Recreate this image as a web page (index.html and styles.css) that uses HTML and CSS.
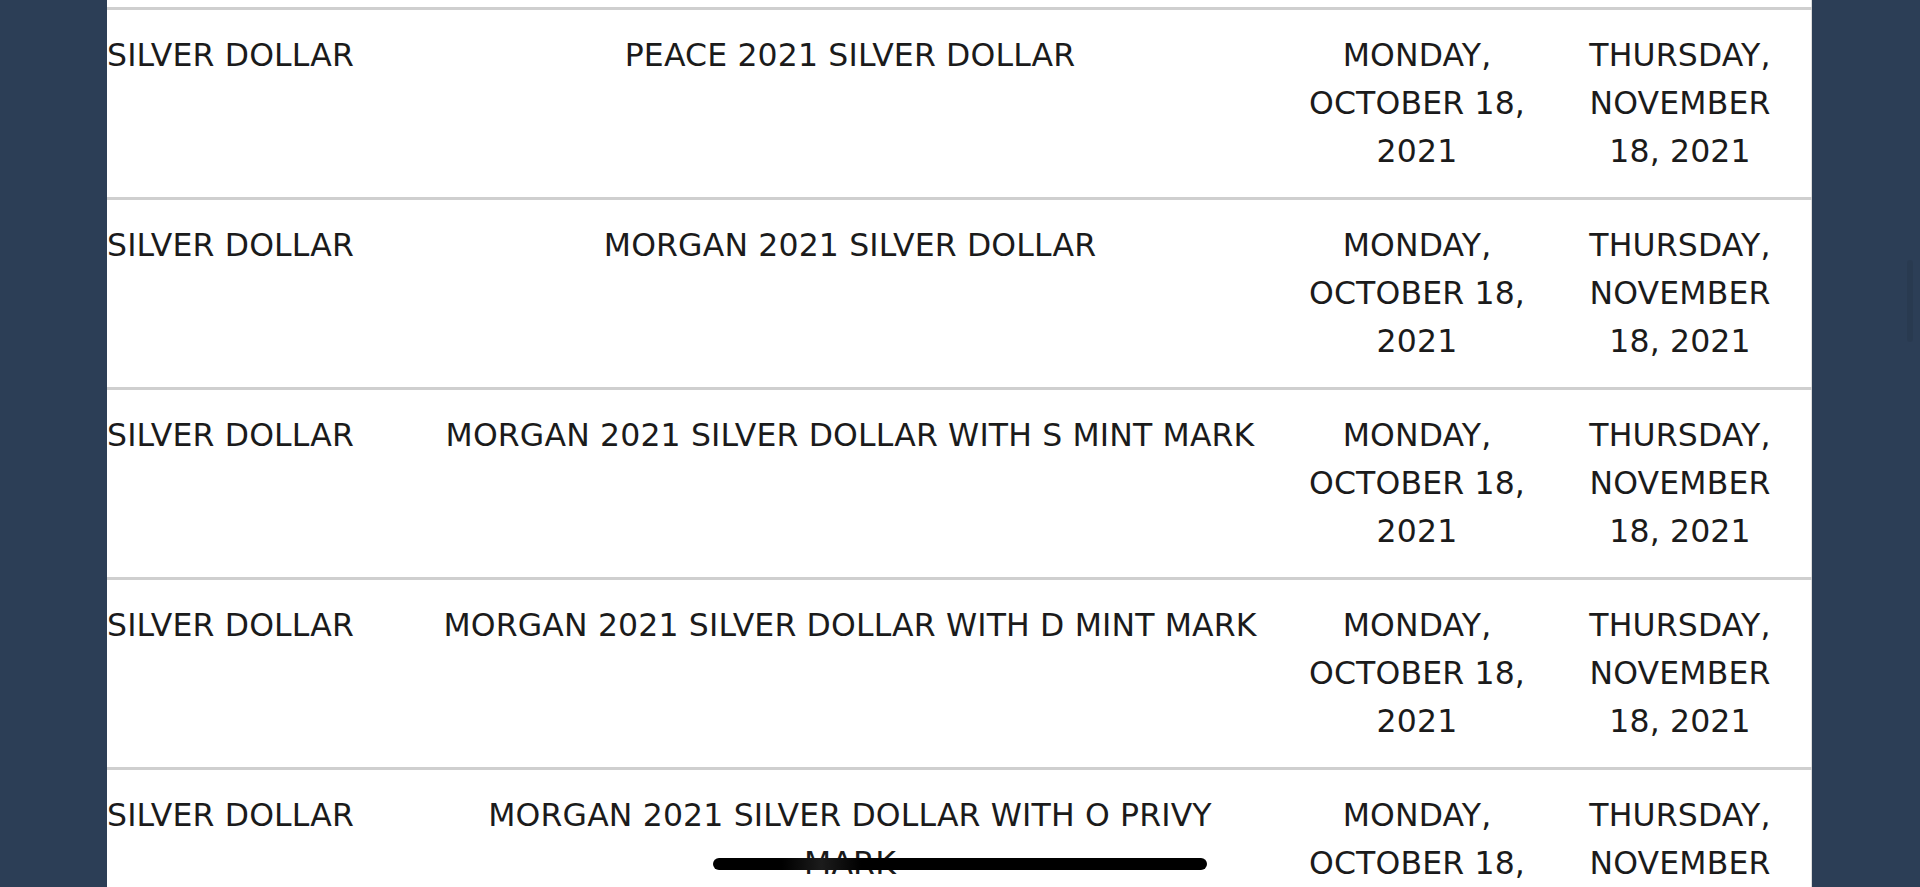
FILE: index.html
```html
<!DOCTYPE html>
<html lang="en">
<head>
	<meta charset="utf-8" />
	<title>2021 Silver Dollar release dates</title>
	<link rel="stylesheet" href="styles.css">
</head>
<body>
    <div class="page">
        <div class="sheet">
            <table class="releases">
                <colgroup>
                    <col class="c-type">
                    <col class="c-name">
                    <col class="c-date">
                    <col class="c-date2">
                </colgroup>
                <tbody>
                    <tr>
                        <td class="type">SILVER DOLLAR</td>
                        <td class="name">PEACE 2021 SILVER DOLLAR</td>
                        <td>MONDAY, OCTOBER 18, 2021</td>
                        <td class="due">THURSDAY, NOVEMBER 18, 2021</td>
                    </tr>
                    <tr>
                        <td class="type">SILVER DOLLAR</td>
                        <td class="name">MORGAN 2021 SILVER DOLLAR</td>
                        <td>MONDAY, OCTOBER 18, 2021</td>
                        <td class="due">THURSDAY, NOVEMBER 18, 2021</td>
                    </tr>
                    <tr>
                        <td class="type">SILVER DOLLAR</td>
                        <td class="name">MORGAN 2021 SILVER DOLLAR WITH S MINT MARK</td>
                        <td>MONDAY, OCTOBER 18, 2021</td>
                        <td class="due">THURSDAY, NOVEMBER 18, 2021</td>
                    </tr>
                    <tr>
                        <td class="type">SILVER DOLLAR</td>
                        <td class="name">MORGAN 2021 SILVER DOLLAR WITH D MINT MARK</td>
                        <td>MONDAY, OCTOBER 18, 2021</td>
                        <td class="due">THURSDAY, NOVEMBER 18, 2021</td>
                    </tr>
                    <tr>
                        <td class="type">SILVER DOLLAR</td>
                        <td class="name">MORGAN 2021 SILVER DOLLAR WITH O PRIVY MARK</td>
                        <td>MONDAY, OCTOBER 18, 2021</td>
                        <td class="due">THURSDAY, NOVEMBER 18, 2021</td>
                    </tr>
                </tbody>
            </table>
        </div>
    </div>

    <!-- overlays: scroll thumb and home indicator -->
    <div class="scroll-thumb"></div>
    <div class="home-bar"></div>
</body>
</html>
```

FILE: styles.css
```css
html, body {
    margin:0;
    height:100%;
}
body {
    background:#2c3e56;
    overflow:hidden;
    font-family:"DejaVu Sans", "Liberation Sans", sans-serif;
}

.page {
    display:flex;
    height:100%;
    padding-left:107px;
}

.sheet {
    width:1705px;
    background:#fff;
    padding-top:7px;
    border-right:1px solid #dcdcdc;
    box-sizing:border-box;
}

.releases {
    width:1705px;
    table-layout:fixed;
    border-collapse:collapse;
    border-spacing:0;
}
.releases .c-type  {width:307px}
.releases .c-name  {width:872px}
.releases .c-date  {width:262px}
.releases .c-date2 {width:264px}

.releases td {
    border-top:3px solid #cfcfcf;
    padding:21px 12px 22px;
    height:144px;
    vertical-align:top;
    text-align:center;
    font-size:31.5px;
    line-height:48px;
    letter-spacing:.15px;
    color:#1b1b1b;
}
.releases td.type {
    text-align:left;
    padding-left:0;
}
/*long names must break before the last word like the live page*/
.releases td.name {
    padding-left:27px;
    padding-right:27px;
}
.releases td.due {
    padding-left:24px;
    padding-right:24px;
}

.scroll-thumb {
    position:fixed;
    left:1907px;
    top:260px;
    width:6px;
    height:82px;
    border-radius:3px;
    background:rgba(0,0,0,.06);
}

.home-bar {
    position:fixed;
    left:713px;
    top:858px;
    width:494px;
    height:12px;
    border-radius:6px;
    background:linear-gradient(90deg, #000 0, #000 14%, #1c1c1c 22%, #000 30%, #000 100%);
}
```
